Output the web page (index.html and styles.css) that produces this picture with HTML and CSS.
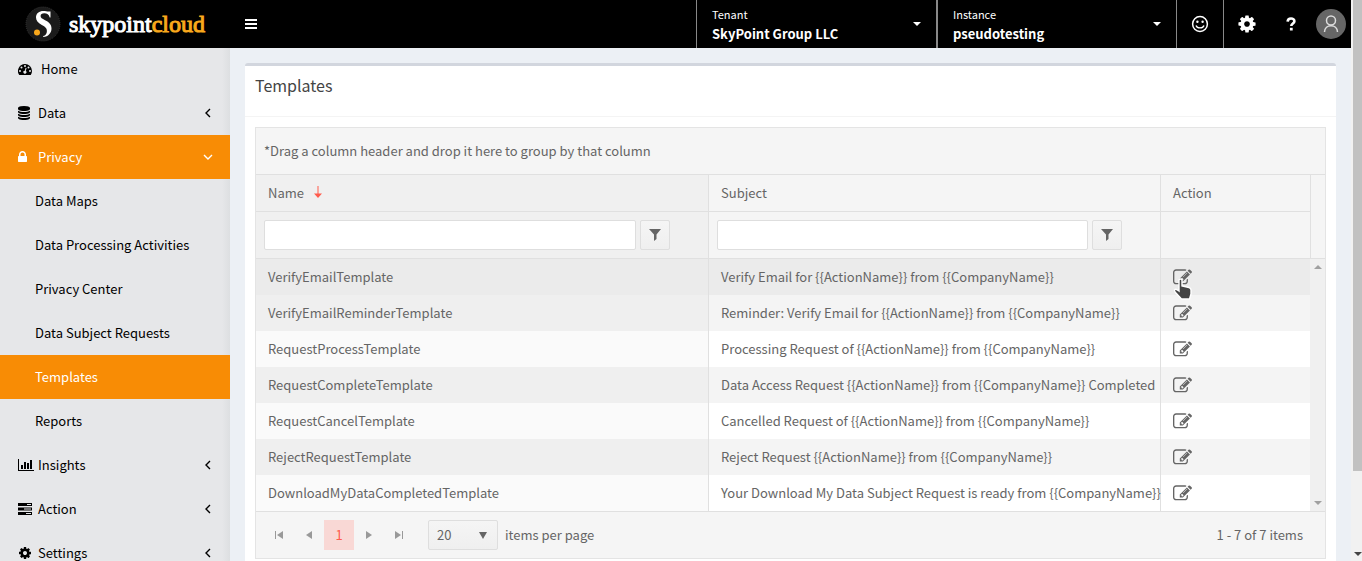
FILE: index.html
```html
<!DOCTYPE html>
<html lang="en">
<head>
<meta charset="utf-8">
<title>Templates - SkyPoint Cloud</title>
<link rel="stylesheet" href="styles.css">
</head>
<body>
<svg class="defs" aria-hidden="true">
  <symbol id="cog" viewBox="0 0 1792 1792"><path d="M1152 896q0-106-75-181t-181-75-181 75-75 181 75 181 181 75 181-75 75-181zm512-109v222q0 12-8 23t-20 13l-185 28q-19 54-39 91 35 50 107 138 10 12 10 25t-9 23q-27 37-99 108t-94 71q-12 0-26-9l-138-108q-44 23-91 38-16 136-29 186-7 28-36 28h-222q-14 0-24.500-8.500t-11.500-21.500l-28-184q-49-16-90-37l-141 107q-10 9-25 9-14 0-25-11-126-114-165-168-7-10-7-23 0-12 8-23 15-21 51-66.500t54-70.500q-27-50-41-99l-183-27q-13-2-21-12.500t-8-23.500v-222q0-12 8-23t19-13l186-28q14-46 39-92-40-57-107-138-10-12-10-24 0-10 9-23 26-36 98.500-107.500t94.500-71.500q13 0 26 10l138 107q44-23 91-38 16-136 29-186 7-28 36-28h222q14 0 24.500 8.500t11.500 21.500l28 184q49 16 90 37l142-107q9-9 24-9 13 0 25 10 129 119 165 170 7 8 7 22 0 12-8 23-15 21-51 66.500t-54 70.500q26 50 41 98l183 28q13 2 21 12.500t8 23.500z"/></symbol>
  <symbol id="edit" viewBox="0 0 1792 1792"><path d="M888 1184l116-116-152-152-116 116v56h96v96h56zm440-720q-16-16-33 1l-350 350q-17 17-1 33t33-1l350-350q17-17 1-33zm80 594v190q0 119-84.500 203.500t-203.500 84.500h-832q-119 0-203.500-84.500t-84.500-203.500v-832q0-119 84.500-203.500t203.500-84.500h832q63 0 117 25 15 7 18 23 3 17-9 29l-49 49q-14 14-32 8-23-6-45-6h-832q-66 0-113 47t-47 113v832q0 66 47 113t113 47h832q66 0 113-47t47-113v-126q0-13 9-22l64-64q15-15 35-7t20 29zm-96-738l288 288-672 672h-288v-288zm444 132l-92 92-288-288 92-92q28-28 68-28t68 28l152 152q28 28 28 68t-28 68z"/></symbol>
  <symbol id="lock" viewBox="320 0 1792 1792"><path d="M640 768h512v-192q0-106-75-181t-181-75-181 75-75 181v192zm832 96v576q0 40-28 68t-68 28h-960q-40 0-68-28t-28-68v-576q0-40 28-68t68-28h32v-192q0-184 132-316t316-132 316 132 132 316v192h32q40 0 68 28t28 68z"/></symbol>
  <symbol id="database" viewBox="128 0 1792 1792"><path d="M896 768q237 0 443-43t325-127v170q0 69-103 128t-280 93.500-385 34.500-385-34.500-280-93.500-103-128v-170q119 84 325 127t443 43zm0 768q237 0 443-43t325-127v170q0 69-103 128t-280 93.500-385 34.500-385-34.500-280-93.500-103-128v-170q119 84 325 127t443 43zm0-384q237 0 443-43t325-127v170q0 69-103 128t-280 93.500-385 34.500-385-34.500-280-93.500-103-128v-170q119 84 325 127t443 43zm0-1152q208 0 385 34.500t280 93.500 103 128v128q0 69-103 128t-280 93.500-385 34.500-385-34.500-280-93.500-103-128v-128q0-69 103-128t280-93.500 385-34.500z"/></symbol>
  <symbol id="gauge" viewBox="0 0 14 14"><path fill-rule="evenodd" d="M7 2a7 7 0 0 1 7 7c0 1.400-.4 2.700-1.100 3.800-.1.100-.2.200-.4.200h-11c-.2 0-.3-.1-.4-.2A7 7 0 0 1 7 2zM2 8a1 1 0 1 0 0 2 1 1 0 0 0 0-2zM3.500 4.500a1 1 0 1 0 0 2 1 1 0 0 0 0-2zM7 3a1 1 0 1 0 0 2 1 1 0 0 0 0-2zM10.500 4.500a1 1 0 1 0 0 2 1 1 0 0 0 0-2zM12 8a1 1 0 1 0 0 2 1 1 0 0 0 0-2zM7.600 5.700l-.8 3a1.500 1.500 0 1 0 1 .3l.8-3z"/></symbol>
  <symbol id="bars" viewBox="0 0 16 14"><path d="M0 1h1v11h15v1H0zM3 7h2v4H3zM6 4h2v7H6zM9 5h2v6H9zM12 2h2v9h-2z"/></symbol>
  <symbol id="server" viewBox="0 0 14 14"><path fill-rule="evenodd" d="M0 1h14v3H0zM9 2v1h4V2zM0 5.500h14v3H0zM6 6.500v1h7v-1zM0 10h14v3H0zM8 11v1h5v-1z"/></symbol>
  <symbol id="chevron" viewBox="0 0 8 10"><path d="M6 1L2 5l4 4" fill="none" stroke="currentColor" stroke-width="1.400"/></symbol>
  <symbol id="funnel" viewBox="0 0 14 14"><path d="M1 1h12L8.500 6.500V11L6 13V6.500z"/></symbol>
</svg>

<div class="window">
  <div class="app">
    <header class="topbar">
      <a class="brand" href="#">
        <svg class="brand-mark" viewBox="0 0 36 36" aria-hidden="true">
          <circle cx="18" cy="18" r="17" fill="#1b1b1b" stroke="#333" stroke-dasharray="1 1"/>
          <path d="M25.500 5.500v6h-.8C24 8.600 22 7.300 19.300 7.300c-2.300 0-3.700 1.100-3.700 2.700 0 1.800 1.300 2.600 4.500 4.200 4.200 2.100 6.400 4.300 6.400 8.200 0 4.500-3.300 8.200-8.300 8.600v-.9c2.500-.8 3.700-2.700 3.700-5.200 0-2.900-1.500-4-5.100-6-4-2.200-5.800-4.300-5.800-7.600 0-4 3.200-6.300 7.300-6.300 2.200 0 3.700.5 5.200.5z" fill="#fff"/>
          <circle cx="12" cy="26.500" r="3" fill="#f9a81c"/>
        </svg>
        <span class="brand-name">skypoint<span class="brand-accent">cloud</span></span>
      </a>
      <button class="menu-toggle" aria-label="Toggle navigation"><svg viewBox="0 0 12 10"><path d="M0 0h12v2H0zM0 4h12v2H0zM0 8h12v2H0z"/></svg></button>
      <button class="picker"><span class="picker-text"><span class="picker-label">Tenant</span><strong class="picker-value">SkyPoint Group LLC</strong></span><span class="caret"></span></button>
      <button class="picker picker-instance"><span class="picker-text"><span class="picker-label">Instance</span><strong class="picker-value">pseudotesting</strong></span><span class="caret"></span></button>
      <button class="tool tool-framed" aria-label="Feedback"><svg class="icon-18" viewBox="0 0 18 18"><circle cx="9" cy="9" r="7.400" fill="none" stroke="#fff" stroke-width="1.500"/><circle cx="6.400" cy="6.800" r="1.200"/><circle cx="11.600" cy="6.800" r="1.200"/><path d="M5 10.500c1.300 3.200 6.700 3.200 8 0" fill="none" stroke="#fff" stroke-width="1.400"/></svg></button>
      <button class="tool" aria-label="Settings"><svg class="icon-20"><use href="#cog"/></svg></button>
      <button class="tool tool-help" aria-label="Help"><svg class="icon-help" viewBox="0 0 10 14"><path d="M1.600 4.600C1.800 2.400 3 1.500 5 1.500c2 0 3.400 1 3.400 2.700 0 2.200-3.100 2.400-3.100 4.800" fill="none" stroke="#fff" stroke-width="2.600"/><path d="M3.900 10.800h2.800v2.700H3.900z"/></svg></button>
      <button class="avatar" aria-label="Account"><svg viewBox="0 0 30 30"><circle cx="15" cy="15" r="15" fill="#666"/><g fill="none" stroke="#ddd" stroke-width="1.500"><circle cx="15" cy="11.500" r="4.500"/><path d="M8.500 23c0-8.500 13-8.500 13 0"/></g></svg></button>
    </header>

    <div class="body">
      <nav class="sidebar">
        <a class="item item-home" href="#"><svg class="item-icon"><use href="#gauge"/></svg>Home</a>
        <a class="item" href="#"><svg class="item-icon"><use href="#database"/></svg>Data<svg class="chevron"><use href="#chevron"/></svg></a>
        <a class="item active" href="#"><svg class="item-icon"><use href="#lock"/></svg>Privacy<svg class="chevron open"><use href="#chevron"/></svg></a>
        <a class="item sub" href="#">Data Maps</a>
        <a class="item sub" href="#">Data Processing Activities</a>
        <a class="item sub" href="#">Privacy Center</a>
        <a class="item sub" href="#">Data Subject Requests</a>
        <a class="item sub active" href="#">Templates</a>
        <a class="item sub" href="#">Reports</a>
        <a class="item" href="#"><svg class="item-icon icon-wide"><use href="#bars"/></svg>Insights<svg class="chevron"><use href="#chevron"/></svg></a>
        <a class="item" href="#"><svg class="item-icon"><use href="#server"/></svg>Action<svg class="chevron"><use href="#chevron"/></svg></a>
        <a class="item" href="#"><svg class="item-icon"><use href="#cog"/></svg>Settings<svg class="chevron"><use href="#chevron"/></svg></a>
      </nav>

      <main class="content">
        <section class="box">
          <h1 class="box-title">Templates</h1>
          <div class="box-body">
            <div class="grid">
              <div class="group-panel">*Drag a column header and drop it here to group by that column</div>
              <div class="grid-area">
                <table class="grid-table">
                  <colgroup><col><col><col class="col-action"></colgroup>
                  <thead>
                    <tr><th class="sorted" scope="col">Name<svg class="sort" viewBox="0 0 8 12"><path d="M3.500 0h1v7.500H8L4 12 0 7.500h3.500z"/></svg></th><th scope="col">Subject</th><th scope="col">Action</th></tr>
                    <tr class="filters">
                      <td class="sorted"><div class="filter"><input type="text" aria-label="Filter by name"><button aria-label="Name filter options"><svg class="icon-14"><use href="#funnel"/></svg></button></div></td>
                      <td><div class="filter"><input type="text" aria-label="Filter by subject"><button aria-label="Subject filter options"><svg class="icon-14"><use href="#funnel"/></svg></button></div></td>
                      <td></td>
                    </tr>
                  </thead>
                  <tbody>
                    <tr class="hover"><td>VerifyEmailTemplate</td><td>Verify Email for {{ActionName}} from {{CompanyName}}</td><td><button class="edit" aria-label="Edit"><svg><use href="#edit"/></svg><svg class="pointer" viewBox="0 0 20 22"><path d="M6 2.500c0-2 3-2 3 0V8l7 1.500c1.500.4 2 1.300 2 2.500v4l-1.500 5h-8L2.500 14.500c-1-1.300-1.400-2.300-.6-3s2-.3 4.100 1.500z" fill="#444" stroke="#fff" stroke-width="1.400"/></svg></button></td></tr>
                    <tr><td>VerifyEmailReminderTemplate</td><td>Reminder: Verify Email for {{ActionName}} from {{CompanyName}}</td><td><button class="edit" aria-label="Edit"><svg><use href="#edit"/></svg></button></td></tr>
                    <tr><td>RequestProcessTemplate</td><td>Processing Request of {{ActionName}} from {{CompanyName}}</td><td><button class="edit" aria-label="Edit"><svg><use href="#edit"/></svg></button></td></tr>
                    <tr><td>RequestCompleteTemplate</td><td>Data Access Request {{ActionName}} from {{CompanyName}} Completed</td><td><button class="edit" aria-label="Edit"><svg><use href="#edit"/></svg></button></td></tr>
                    <tr><td>RequestCancelTemplate</td><td>Cancelled Request of {{ActionName}} from {{CompanyName}}</td><td><button class="edit" aria-label="Edit"><svg><use href="#edit"/></svg></button></td></tr>
                    <tr><td>RejectRequestTemplate</td><td>Reject Request {{ActionName}} from {{CompanyName}}</td><td><button class="edit" aria-label="Edit"><svg><use href="#edit"/></svg></button></td></tr>
                    <tr><td>DownloadMyDataCompletedTemplate</td><td>Your Download My Data Subject Request is ready from {{CompanyName}}</td><td><button class="edit" aria-label="Edit"><svg><use href="#edit"/></svg></button></td></tr>
                  </tbody>
                </table>
                <div class="gutter">
                  <div class="gutter-head"></div>
                  <div class="gutter-track"><span class="arrow-up"></span><span class="arrow-down"></span></div>
                </div>
              </div>
              <footer class="pager">
                <button class="page" aria-label="First page"><svg class="icon-8" viewBox="0 0 8 8"><path d="M0 0h1v8H0zM8 0v8L2 4z"/></svg></button>
                <button class="page" aria-label="Previous page"><svg class="icon-8" viewBox="0 0 8 8"><path d="M7 0v8L1 4z"/></svg></button>
                <button class="page current">1</button>
                <button class="page" aria-label="Next page"><svg class="icon-8" viewBox="0 0 8 8"><path d="M1 0v8l6-4z"/></svg></button>
                <button class="page" aria-label="Last page"><svg class="icon-8" viewBox="0 0 8 8"><path d="M7 0h1v8H7zM0 0v8l6-4z"/></svg></button>
                <span class="size-wrap"><select id="page-size" class="size"><option>20</option></select><svg class="size-arrow" viewBox="0 0 8 7"><path d="M0 0h8L4 7z"/></svg></span>
                <label for="page-size">items per page</label>
                <span class="summary">1 - 7 of 7 items</span>
              </footer>
            </div>
          </div>
        </section>
      </main>
    </div>
  </div>
  <div class="scrollbar"><div class="thumb"></div><span class="arrow-down dark"></span></div>
</div>
</body>
</html>
```
FILE: styles.css
```css
* { box-sizing: border-box; }
body {
  margin: 0;
  font: 13px/20px "Noto Sans CJK SC", "Noto Sans", sans-serif;
  color: #656565;
  background: #ecf0f5;
}
button, input, select { font: inherit; color: inherit; margin: 0; }
button { border: 0; padding: 0; background: none; cursor: pointer; }
svg { display: block; fill: currentColor; flex: none; }
a { color: inherit; text-decoration: none; }
.defs { display: none; }

.window { display: flex; height: 100vh; overflow: hidden; }
.app { flex: 1; display: flex; flex-direction: column; min-width: 0; }

.topbar { display: flex; flex: none; height: 48px; margin-bottom: -1px; z-index: 1; background: #000; color: #fff; }
.brand { display: flex; align-items: center; gap: 8px; width: 230px; padding-left: 25px; }
.brand-mark { width: 36px; height: 36px; }
.brand-name { font: 24px/28px "Liberation Serif", serif; -webkit-text-stroke: 1px; }
.brand-accent { color: #f9a81c; }
.menu-toggle { padding: 0 15px; margin-right: auto; color: #fff; }
.menu-toggle svg { width: 12px; height: 10px; }
.picker { display: flex; align-items: center; width: 240px; padding: 0 15px; border-left: 1px solid #888; color: #fff; text-align: left; }
.picker-instance { border-left-width: 2px; }
.picker-text { flex: 1; }
.picker-label { display: block; font-size: 11px; }
.picker-value { display: block; }
.caret { border: 4px solid transparent; border-top-color: #fff; border-bottom: 0; }
.tool { display: grid; place-items: center; width: 46px; color: #fff; }
.tool-framed { width: 48px; border: solid #888; border-width: 0 1px; }
.tool-help { width: 41px; }
.icon-8 { width: 8px; height: 8px; }
.icon-14 { width: 14px; height: 14px; }
.icon-18 { width: 18px; height: 18px; }
.icon-20 { width: 20px; height: 20px; }
.icon-help { width: 10px; height: 14px; }
.avatar { width: 40px; padding: 0 5px; }
.avatar svg { width: 30px; height: 30px; }

.body { flex: 1; display: flex; min-height: 0; }
.sidebar { width: 230px; flex: none; overflow: hidden; background: linear-gradient(to left, #dddfe1, #e6e7e9 8px); color: #000; }
.item { display: flex; align-items: center; height: 44px; padding: 0 18px; }
.item-icon { width: 14px; height: 14px; margin-right: 6px; }
.icon-wide { width: 16px; margin-right: 4px; }
.item-home .item-icon { margin-right: 9px; }
.sub { padding-left: 35px; }
.active { background: #f88c05; color: #fff; }
.chevron { width: 8px; height: 10px; margin-left: auto; }
.open { transform: rotate(-90deg); }

.content { flex: 1; min-width: 0; padding: 16px 15px; }
.box { border-top: 3px solid #d2d6de; border-radius: 3px; background: #fff; }
.box-title { margin: 0; padding: 8px 10px 20px; font-size: 16px; font-weight: normal; line-height: 22px; color: #444; border-bottom: 1px solid #f4f4f4; }
.box-body { padding: 10px; }
.grid { border: 1px solid #e4e4e4; background: #f5f5f5; }
.group-panel { padding: 13px 8px; border-bottom: 1px solid #e0e0e0; }

.grid-area { display: flex; }
.grid-table { flex: 1; table-layout: fixed; border-collapse: separate; border-spacing: 0; width: 100%; }
.col-action { width: 150px; }
th, td { height: 36px; padding: 0 0 0 12px; text-align: left; font-weight: normal; white-space: nowrap; }
th + th, td + td { border-left: 1px solid #e0e0e0; }
th { height: 37px; border-bottom: 1px solid #e0e0e0; }
.sorted { background: #f0f0f0; }
.sort { display: inline-block; width: 8px; height: 12px; margin-left: 10px; color: #ff5c4d; }
.filters td { height: 47px; padding: 0 8px; border-bottom: 1px solid #e0e0e0; }
.filter { display: flex; gap: 4px; padding-right: 30px; }
.filter input { flex: 1; min-width: 0; height: 30px; padding: 0 8px; border: 1px solid #dedede; border-radius: 2px; background: #fff; }
.filter button { display: grid; place-items: center; width: 30px; height: 30px; border: 1px solid #dedede; border-radius: 2px; background: linear-gradient(#f5f5f5, #efefef); }
tbody td { background: #fff; }
tbody td:first-child { background: #fafafa; }
tbody tr:nth-child(even) td { background: #f4f4f4; }
tbody tr:nth-child(even) td:first-child { background: #efefef; }
tbody tr.hover td, tbody tr.hover td:first-child { background: #ebebeb; }
.edit { position: relative; display: block; }
.edit svg { width: 19px; height: 19px; }
.edit .pointer { position: absolute; left: 0; top: 10px; width: 20px; height: 22px; z-index: 2; }

.gutter { display: flex; flex-direction: column; width: 15px; }
.gutter-head { height: 84px; border-left: 1px solid #e0e0e0; border-bottom: 1px solid #e0e0e0; }
.gutter-track { flex: 1; display: flex; flex-direction: column; justify-content: space-between; align-items: center; padding: 6px 0; background: #f0f0f0; }
.arrow-up { border: 4px solid transparent; border-bottom-color: #a0a0a0; border-top: 0; }
.arrow-down { border: 4px solid transparent; border-top-color: #a0a0a0; border-bottom: 0; }

.pager { display: flex; align-items: center; padding: 8px 22px 8px 8px; border-top: 1px solid #e0e0e0; }
.page { display: grid; place-items: center; width: 30px; height: 30px; color: #999; }
.current { background: #f9d8d5; color: #ff5c4d; }
.size-wrap { position: relative; margin: 0 7px 0 14px; }
.size { display: block; width: 70px; height: 30px; padding: 0 8px; appearance: none; border: 1px solid #dedede; border-radius: 2px; background: linear-gradient(#f5f5f5, #efefef); }
.size-arrow { position: absolute; right: 11px; top: 12px; width: 8px; height: 7px; pointer-events: none; }
.summary { margin-left: auto; }

.scrollbar { display: flex; flex-direction: column; justify-content: space-between; align-items: center; width: 11px; padding: 0 0 5px 2px; background: #f1f1f1; }
.thumb { align-self: stretch; height: 84vh; background: #c1c1c1; }
.dark { border-top-color: #444; }
```
